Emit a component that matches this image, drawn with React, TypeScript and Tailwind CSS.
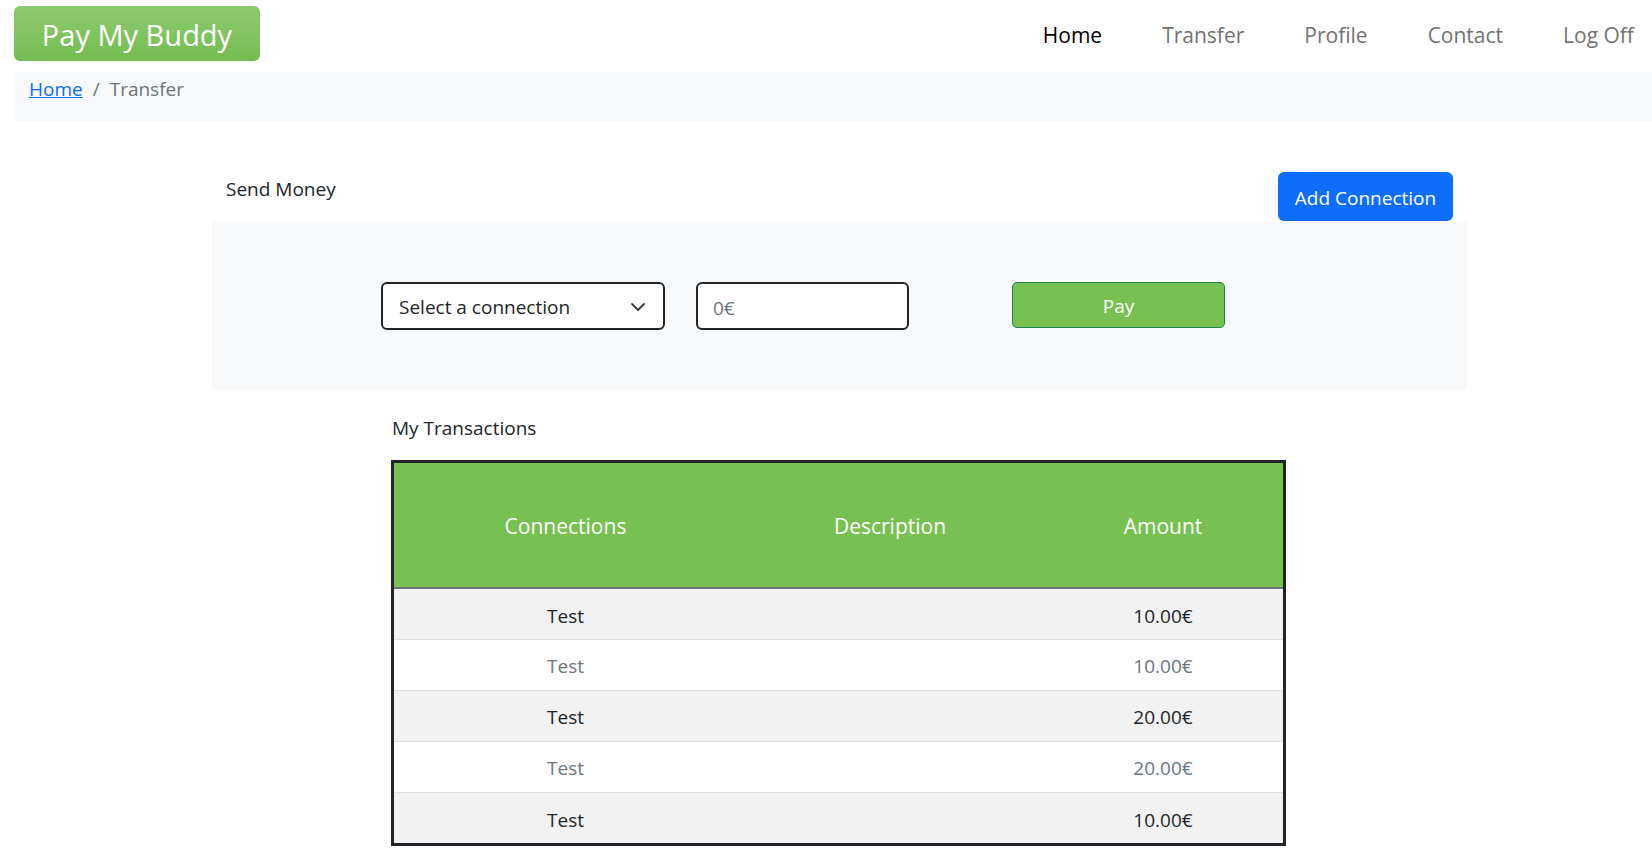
import React from "react";

type Tx = { connection: string; description: string; amount: string };

const transactions: Tx[] = [
  { connection: "Test", description: "", amount: "10.00€" },
  { connection: "Test", description: "", amount: "10.00€" },
  { connection: "Test", description: "", amount: "20.00€" },
  { connection: "Test", description: "", amount: "20.00€" },
  { connection: "Test", description: "", amount: "10.00€" },
];

const navLinks = ["Home", "Transfer", "Profile", "Contact", "Log Off"];

export default function App() {
  return (
    <div className="min-h-screen bg-white font-['Open_Sans',sans-serif] text-[#212529]">
      {/* top bar */}
      <header className="flex items-start h-[72px]">
        <div className="mt-[6px] ml-[14px] w-[246px] h-[55px] rounded-[6px] bg-gradient-to-b from-[#8dcb6e] to-[#74bd51] flex items-center justify-center pt-[2px] text-white text-[29px] leading-none">
          Pay My Buddy
        </div>
        <nav className="ml-auto mt-[20px] pr-[18px] flex gap-[60px] text-[21px] leading-[30px]">
          {navLinks.map((link, i) => (
            <a
              key={link}
              href="#"
              className={i === 0 ? "text-black" : "text-[#737373]"}
            >
              {link}
            </a>
          ))}
        </nav>
      </header>

      {/* breadcrumb */}
      <div className="ml-[14px] h-[49px] bg-[#f8f9fa] pl-[15px] pt-[2px] flex items-start text-[19px] leading-[30px]">
        <a href="#" className="text-[#0d6efd] underline">
          Home
        </a>
        <span className="px-[10px] text-[#6c757d]">/</span>
        <span className="text-[#6c757d]">Transfer</span>
      </div>

      <main className="ml-[212px] w-[1255px]">
        <div className="mt-[51px] flex items-start justify-between px-[14px]">
          <span className="mt-[2px] text-[19px] leading-[30px]">Send Money</span>
          <button className="h-[49px] w-[175px] rounded-[6px] bg-[#0d6efd] pt-[3px] text-white text-[19px]">
            Add Connection
          </button>
        </div>

        <div className="mt-[1px] h-[168px] bg-[#f8f9fa] pt-[60px] pl-[169px] flex items-start">
          <div className="w-[284px] h-[48px] rounded-[6px] border-2 border-[#212529] bg-white flex items-center justify-between pl-[16px] pr-[17px] text-[19px]">
            <span className="pt-[3px]">Select a connection</span>
            <svg width="16" height="12" viewBox="0 0 16 12" fill="none">
              <path
                d="m2 4 6 6 6-6"
                stroke="#343a40"
                strokeWidth="1.8"
                strokeLinecap="round"
                strokeLinejoin="round"
              />
            </svg>
          </div>
          <input
            type="text"
            placeholder="0€"
            className="ml-[31px] w-[213px] h-[48px] rounded-[6px] border-2 border-[#212529] bg-white px-[15px] pt-[3px] text-[19px] placeholder:text-[#6c757d] outline-none"
          />
          <button className="ml-[103px] w-[213px] h-[46px] rounded-[5px] border border-[#198754] bg-[#77c153] pt-[3px] text-white text-[19px]">
            Pay
          </button>
        </div>

        <div className="ml-[179px] w-[895px]">
          <p className="mt-[23px] mb-[17px] pl-[1px] text-[19px] leading-[30px]">
            My Transactions
          </p>
          <div className="border-[3px] border-[#212529]">
            <table className="w-full table-fixed border-collapse text-center">
              <colgroup>
                <col className="w-[343px]" />
                <col className="w-[306px]" />
                <col />
              </colgroup>
              <thead>
                <tr className="h-[125px] bg-[#77c152] text-white text-[21px] border-b-2 border-[#6c757d]">
                  <th className="font-normal pt-[3px]">Connections</th>
                  <th className="font-normal pt-[3px]">Description</th>
                  <th className="font-normal pt-[3px]">Amount</th>
                </tr>
              </thead>
              <tbody className="text-[19px]">
                {transactions.map((tx, i) => (
                  <tr
                    key={i}
                    className={
                      "h-[51px] border-b border-[#dee2e6] last:border-b-0 " +
                      (i % 2 === 0 ? "bg-[#f2f2f2] text-[#212529]" : "bg-white text-[#6c757d]")
                    }
                  >
                    <td className="pt-[4px]">{tx.connection}</td>
                    <td className="pt-[4px]">{tx.description}</td>
                    <td className="pt-[4px]">{tx.amount}</td>
                  </tr>
                ))}
              </tbody>
            </table>
          </div>
        </div>
      </main>
    </div>
  );
}
